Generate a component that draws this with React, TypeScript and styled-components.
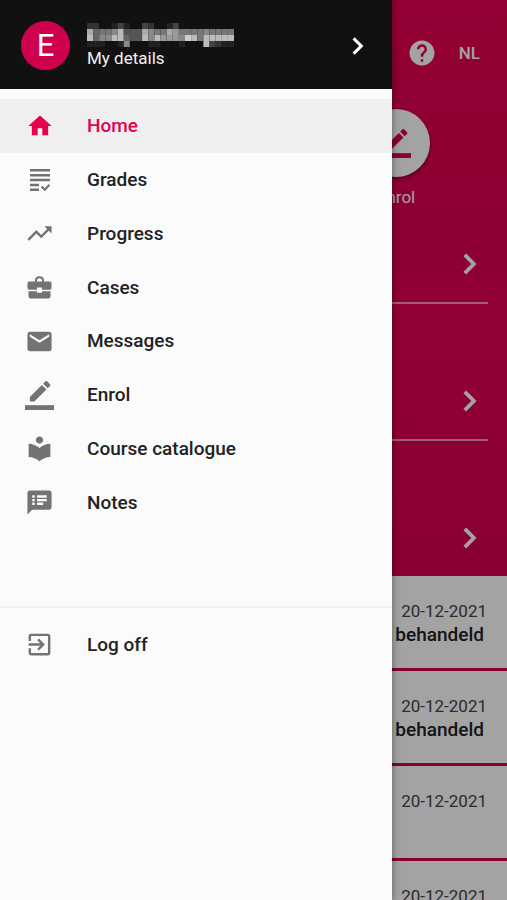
import React from "react";
import styled, { createGlobalStyle } from "styled-components";
import {
  MdHome, MdTrendingUp, MdEmail, MdLocalLibrary,
  MdSpeakerNotes, MdExitToApp, MdHelp,
} from "react-icons/md";

const Global = createGlobalStyle`
  * { box-sizing: border-box; }
  html, body, #root { height: 100%; }
  body { margin: 0; overflow: hidden; font-family: Roboto, sans-serif; background: #ffffff; }
  button { font: inherit; border: 0; background: none; padding: 0; cursor: pointer; }
  svg { display: block; flex: none; }
`;

const Shell = styled.div`
  position: relative;
  height: 100vh;
  overflow: hidden;
`;

const Hero = styled.header`
  display: flex;
  flex-direction: column;
  background: linear-gradient(#e80053, #dc0050 45%, #e60054 52%, #d80050);
  color: #ffffff;
`;

const TopBar = styled.div`
  display: flex;
  justify-content: flex-end;
  align-items: center;
  gap: 22px;
  height: 105px;
  padding: 0 27px 0 20px;
`;

const TopButton = styled.button`
  color: #ffffff;
  font-size: 17px;
  font-weight: 500;
  line-height: 30px;
`;

const Shortcuts = styled.div`
  display: flex;
  justify-content: flex-end;
  height: 123px;
  padding: 4px 77px 0 0;
`;

const Shortcut = styled.button`
  display: flex;
  flex-direction: column;
  align-items: center;
  gap: 9px;
  width: 68px;
  color: #ffffff;
  font-size: 17px;
  line-height: 22px;
`;

const Disc = styled.span`
  display: grid;
  place-items: center;
  width: 68px;
  height: 68px;
  border-radius: 50%;
  background: #ffffff;
  color: #dc0050;
  box-shadow: 0 2px 4px rgba(0, 0, 0, 0.4);
`;

const Sections = styled.nav`
  display: flex;
  flex-direction: column;
`;

const Section = styled.button`
  display: flex;
  flex: none;
  justify-content: flex-end;
  align-items: flex-end;
  height: 137px;
  margin: 0 19px 0 20px;
  padding-bottom: 20px;
  color: #ffffff;
  border-bottom: 2px solid rgba(255, 255, 255, 0.6);

  &:first-of-type { height: 76px; }
  &:last-of-type { height: 135px; border-bottom: 0; }
`;

const Feed = styled.main`
  display: flex;
  flex-direction: column;
`;

const Card = styled.article`
  flex: none;
  height: 95px;
  padding: 24px 20px 0;
  border-bottom: 3px solid #d4004e;
  text-align: right;
`;

const CardDate = styled.time`
  display: block;
  color: #444444;
  font-size: 17px;
  line-height: 22px;
`;

const CardStatus = styled.p`
  margin: 0;
  padding-right: 3px;
  color: #222222;
  font-size: 19px;
  font-weight: 500;
  line-height: 26px;
`;

const Scrim = styled.div`
  position: absolute;
  inset: 0;
  background: rgba(0, 0, 0, 0.36);
`;

const Drawer = styled.aside`
  position: absolute;
  inset: 0 115px 0 0;
  display: flex;
  flex-direction: column;
  background: #fbfbfb;
  box-shadow: 0 0 8px rgba(0, 0, 0, 0.45);
`;

const Profile = styled.button`
  display: flex;
  align-items: center;
  gap: 17px;
  height: 89px;
  padding: 2px 19px 0 21px;
  background: #111111;
  color: #ffffff;
  text-align: left;
`;

const Avatar = styled.span`
  display: grid;
  place-items: center;
  width: 49px;
  height: 49px;
  border-radius: 50%;
  background: #cf004d;
  font-size: 31px;
  line-height: 49px;
`;

const Identity = styled.span`
  display: flex;
  flex: 1;
  flex-direction: column;
  color: #f0f0f0;
  font-size: 17px;
  line-height: 22px;
`;

const Menu = styled.nav`
  display: grid;
  grid-auto-rows: 1fr;
  height: 430px;
  margin-top: 10px;
`;

const Item = styled.button<{ $active?: boolean }>`
  display: flex;
  align-items: center;
  gap: 33px;
  padding: 1px 25px 0;
  background: ${(p) => (p.$active ? "#efefef" : "transparent")};
  color: ${(p) => (p.$active ? "#e60050" : "#222222")};
  font-size: 19px;
  font-weight: 500;
  line-height: 24px;
  text-align: left;

  svg { color: ${(p) => (p.$active ? "#e60050" : "#737373")}; }
`;

const IconSlot = styled.span`
  display: grid;
  place-items: center;
  width: 29px;
`;

const Footer = styled.div`
  display: grid;
  grid-auto-rows: 54px;
  margin-top: 77px;
  padding-top: 9px;
  border-top: 2px solid #f1f1f1;
`;

const GradesIcon = () => (
  <svg width="20" height="24" viewBox="0 0 20 24" fill="currentColor" aria-hidden="true">
    <path d="M0 1h20v2.5H0zM0 5.9h20v2.5H0zM0 10.8h20v2.5H0zM0 15.7h9v2.5H0zM0 20.6h9v2.5H0z" />
    <path d="M11.5 18.5l3.3 3.2 4.7-5" fill="none" stroke="currentColor" strokeWidth="2.2" />
  </svg>
);

const PencilIcon = () => (
  <svg width="29" height="29" viewBox="0 0 24 24" fill="currentColor" aria-hidden="true">
    <path d="M17.75 7L14 3.25l-10 10V17h3.75l10-10zm2.96-2.96c.39-.39.39-1.02 0-1.41L18.37.29a1 1 0 0 0-1.41 0L15 2.25 18.75 6l1.96-1.96z" />
    <path d="M0 20h24v4H0z" />
  </svg>
);

const BriefcaseIcon = () => (
  <svg width="25" height="23" viewBox="0 0 25 23" fill="currentColor" aria-hidden="true">
    <path d="M9 6V4.2Q9 1.2 12.5 1.2T16 4.2V6" fill="none" stroke="currentColor" strokeWidth="2" />
    <path d="M2 5.5h21q1.5 0 1.5 1.5v5q0 1.8-1.8 1.8H15V11.6h-5v2.2H2.3Q.5 13.8.5 12V7Q.5 5.5 2 5.5z" />
    <path d="M1.5 15.3H10v1.4h5v-1.4h8.5v5q0 2.2-2 2.2h-18q-2 0-2-2.2z" />
  </svg>
);

const ChevronIcon = ({ size }: { size: number }) => (
  <svg width={size} height={size} viewBox="0 0 24 24" fill="none" stroke="currentColor" strokeWidth="2.5" aria-hidden="true">
    <path d="M9.4 6.8l5.2 5.2-5.2 5.2" strokeLinecap="square" />
  </svg>
);

/* Grey levels of the pixelated account name, one string of hex digits per row. */
const nameRows = [
  "331124211431124111111111",
  "a6778b555a877a9777787777",
  "b688bb655b8b9998cb7bbbbb",
  "2221128111221112111b4322",
];

const HiddenName = () => (
  <svg width="147" height="24" viewBox="0 0 144 24" preserveAspectRatio="none" role="img" aria-label="Name hidden">
    {nameRows.map((row, y) =>
      row.split("").map((level, x) => (
        <rect key={`${x}-${y}`} x={x * 6} y={y * 6} width="6" height="6" fill={`#${level}${level}${level}`} />
      ))
    )}
  </svg>
);

const items = [
  { label: "Home", icon: <MdHome size={28} />, active: true },
  { label: "Grades", icon: <GradesIcon /> },
  { label: "Progress", icon: <MdTrendingUp size={29} /> },
  { label: "Cases", icon: <BriefcaseIcon /> },
  { label: "Messages", icon: <MdEmail size={29} /> },
  { label: "Enrol", icon: <PencilIcon /> },
  { label: "Course catalogue", icon: <MdLocalLibrary size={29} /> },
  { label: "Notes", icon: <MdSpeakerNotes size={29} /> },
];

const cards = [
  { date: "20-12-2021", status: "behandeld" },
  { date: "20-12-2021", status: "behandeld" },
  { date: "20-12-2021" },
  { date: "20-12-2021" },
];

export default function App() {
  return (
    <Shell>
      <Global />
      <Hero>
        <TopBar>
          <TopButton aria-label="Help"><MdHelp size={30} /></TopButton>
          <TopButton>NL</TopButton>
        </TopBar>
        <Shortcuts>
          <Shortcut><Disc><PencilIcon /></Disc>Enrol</Shortcut>
        </Shortcuts>
        <Sections>
          {[0, 1, 2].map((n) => (
            <Section key={n} aria-label="Open section"><ChevronIcon size={36} /></Section>
          ))}
        </Sections>
      </Hero>
      <Feed>
        {cards.map((c, i) => (
          <Card key={i}>
            <CardDate>{c.date}</CardDate>
            {c.status && <CardStatus>{c.status}</CardStatus>}
          </Card>
        ))}
      </Feed>
      <Scrim />
      <Drawer>
        <Profile>
          <Avatar>E</Avatar>
          <Identity><HiddenName />My details</Identity>
          <ChevronIcon size={30} />
        </Profile>
        <Menu>
          {items.map((it) => (
            <Item key={it.label} $active={it.active}>
              <IconSlot>{it.icon}</IconSlot>{it.label}
            </Item>
          ))}
        </Menu>
        <Footer>
          <Item><IconSlot><MdExitToApp size={29} /></IconSlot>Log off</Item>
        </Footer>
      </Drawer>
    </Shell>
  );
}
